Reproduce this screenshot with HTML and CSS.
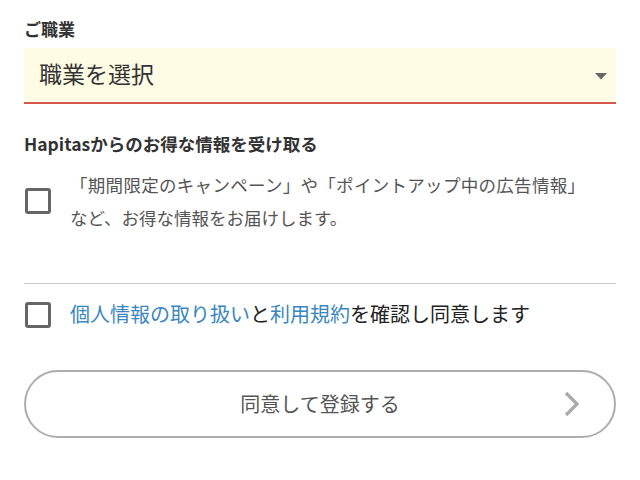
FILE: index.html
```html
<!DOCTYPE html>
<html lang="ja">
<head>
<meta charset="utf-8">
<link rel="stylesheet" href="styles.css">
</head>
<body>
<div class="page">
  <div class="label">ご職業</div>
  <div class="select">
    <span class="select-text">職業を選択</span>
    <svg class="select-arrow" width="12" height="7" viewBox="0 0 12 7"><path d="M0 0 H12 L6 6.5 Z" fill="#666"/></svg>
  </div>
  <div class="title">Hapitasからのお得な情報を受け取る</div>
  <div class="check-row check-row-multi">
    <span class="checkbox"></span>
    <div class="multi-text">
      <span class="line line-just">「期間限定のキャンペーン」や「ポイントアップ中の広告情報」</span>
      <span class="line">など、お得な情報をお届けします。</span>
    </div>
  </div>
  <div class="divider"></div>
  <div class="check-row check-row-agree">
    <span class="checkbox"></span>
    <span class="agree-text"><span class="link">個人情報の取り扱い</span>と<span class="link">利用規約</span>を確認し同意します</span>
  </div>
  <div class="button">
    <span class="button-text">同意して登録する</span>
    <svg class="button-chevron" width="16" height="26" viewBox="0 0 16 26"><path d="M2 2 L13 13 L2 24" fill="none" stroke="#aaa" stroke-width="3.2"/></svg>
  </div>
</div>
</body>
</html>
```

FILE: styles.css
```css
html, body {
  margin: 0;
  padding: 0;
  background: #fff;
}
body {
  font-family: "Noto Sans CJK JP", "Noto Sans", sans-serif;
  color: #333;
}
.page {
  width: 592px;
  margin: 0 0 0 24px;
  padding-top: 17px;
}
.label {
  font-size: 17px;
  line-height: 24px;
  font-weight: bold;
  color: #333;
}
.select {
  margin-top: 7px;
  height: 54px;
  background: #fffce6;
  border-bottom: 2px solid #d4584e;
  display: flex;
  align-items: center;
  justify-content: space-between;
  padding: 0 9px 0 15px;
}
.select-text {
  font-size: 23px;
  line-height: 30px;
  color: #333;
  margin-top: -5px;
}
.select-arrow {
  margin-top: 2px;
}
.title {
  margin-top: 27px;
  font-size: 17.5px;
  line-height: 26px;
  font-weight: bold;
  color: #333;
}
.check-row {
  display: flex;
  align-items: center;
}
.check-row-multi {
  margin-top: 11px;
}
.checkbox {
  flex: none;
  width: 20px;
  height: 20px;
  border: 3px solid #666;
  border-radius: 3px;
  margin-left: 1px;
  background: #fff;
}
.multi-text {
  margin-left: 19px;
  width: 515px;
  display: flex;
  flex-direction: column;
  font-size: 17.5px;
  line-height: 33px;
  color: #555;
}
.line {
  display: block;
  white-space: nowrap;
}
.line-just {
  text-align: justify;
  text-align-last: justify;
  white-space: normal;
}
.divider {
  margin-top: 49px;
  border-top: 1px solid #ccc;
  height: 0;
}
.check-row-agree {
  margin-top: 16px;
  height: 30px;
}
.agree-text {
  margin-left: 19px;
  font-size: 20px;
  line-height: 30px;
  color: #222;
  white-space: nowrap;
  margin-top: -2px;
}
.link {
  color: #3a87c0;
}
.button {
  margin-top: 40px;
  height: 64px;
  border: 2px solid #adadad;
  border-radius: 34px;
  display: flex;
  align-items: center;
  justify-content: center;
  position: relative;
}
.button-text {
  font-size: 20px;
  line-height: 28px;
  color: #555;
}
.button-chevron {
  position: absolute;
  right: 34px;
  top: 19px;
}
```
